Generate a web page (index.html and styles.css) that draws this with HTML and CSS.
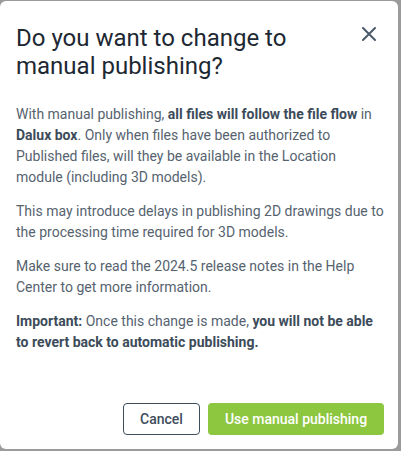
FILE: index.html
```html
<!DOCTYPE html>
<html lang="en">
<head>
    <meta charset="UTF-8">
    <meta name="viewport" content="width=device-width, initial-scale=1.0">
    <title>Change to manual publishing</title>
    <link rel="stylesheet" href="styles.css">
</head>
<body>
    <div class="dialog">
        <div class="dialog-header">
            <h1 class="dialog-title">Do you want to change to manual publishing?</h1>
            <button class="close-button" aria-label="Close">
                <svg width="14" height="14" viewBox="0 0 14 14">
                    <path d="M1 1 L13 13 M13 1 L1 13" stroke="#4a5b6b" stroke-width="2" stroke-linecap="round"/>
                </svg>
            </button>
        </div>

        <div class="dialog-body">
            <p>With manual publishing, <b>all files will follow the file flow</b> in <b>Dalux box</b>. Only when files have been authorized to Published files, will they be available in the Location module (including 3D models).</p>
            <p>This may introduce delays in publishing 2D drawings due to the processing time required for 3D models.</p>
            <p>Make sure to read the 2024.5 release notes in the Help Center to get more information.</p>
            <p><b>Important:</b> Once this change is made, <b>you will not be able to revert back to automatic publishing.</b></p>
        </div>

        <div class="dialog-footer">
            <button class="btn btn-cancel">Cancel</button>
            <button class="btn btn-primary">Use manual publishing</button>
        </div>
    </div>
</body>
</html>
```

FILE: styles.css
```css
body {
    font-family: Roboto, 'Noto Sans', sans-serif;
    margin: 0;
    padding: 0;
    background: #9b9b9b;
    width: 401px;
    height: 451px;
    overflow: hidden;
}

.dialog {
    background: #ffffff;
    width: 398px;
    height: 448px;
    margin-top: 1px;
    border-radius: 6px;
    display: flex;
    flex-direction: column;
    box-sizing: border-box;
}

.dialog-header {
    display: flex;
    align-items: flex-start;
    justify-content: space-between;
    padding: 23px 22px 0 16px;
}

.dialog-title {
    margin: 0;
    font-size: 24px;
    font-weight: 400;
    line-height: 28px;
    color: #1d2833;
    width: 300px;
}

.close-button {
    background: none;
    border: none;
    padding: 0;
    margin-top: 3px;
    cursor: pointer;
    display: flex;
}

.dialog-body {
    padding: 24px 12px 0 16px;
    flex: 1;
}

.dialog-body p {
    margin: 0 0 13px 0;
    font-size: 14px;
    line-height: 21px;
    color: #56636f;
}

.dialog-body b {
    font-weight: 700;
    color: #3c4b5a;
}

.dialog-footer {
    display: flex;
    justify-content: flex-end;
    gap: 8px;
    padding: 0 14px 14px 0;
}

.btn {
    font-family: Roboto, sans-serif;
    font-size: 14px;
    font-weight: 500;
    height: 32px;
    border-radius: 4px;
    cursor: pointer;
    padding: 0 16px;
}

.btn-cancel {
    background: #ffffff;
    border: 1px solid #3d4d5c;
    color: #3d4d5c;
    width: 77px;
}

.btn-primary {
    background: #8dc63f;
    border: none;
    color: #ffffff;
    width: 176px;
}
```
